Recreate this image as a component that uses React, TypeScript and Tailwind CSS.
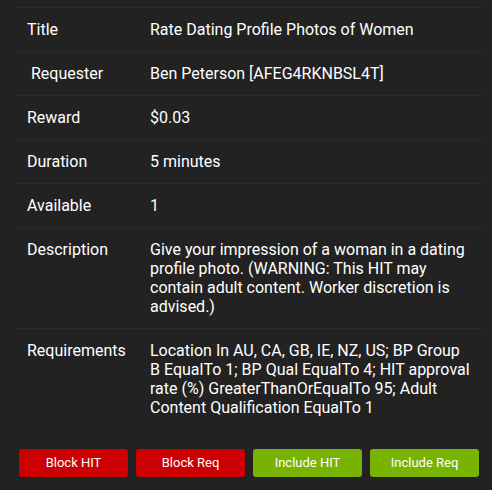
import React from "react";

const rows: [string, string][] = [
  ["Title", "Rate Dating Profile Photos of Women"],
  ["\u00a0Requester", "Ben Peterson [AFEG4RKNBSL4T]"],
  ["Reward", "$0.03"],
  ["Duration", "5 minutes"],
  ["Available", "1"],
  [
    "Description",
    "Give your impression of a woman in a dating profile photo. (WARNING: This HIT may contain adult content. Worker discretion is advised.)",
  ],
  [
    "Requirements",
    "Location In AU, CA, GB, IE, NZ, US; BP Group B EqualTo 1; BP Qual EqualTo 4; HIT approval rate (%) GreaterThanOrEqualTo 95; Adult Content Qualification EqualTo 1",
  ],
];

export default function App() {
  return (
    <div
      className="w-[492px] h-[490px] bg-[#222222] text-white overflow-hidden"
      style={{ fontFamily: "Roboto, 'Noto Sans', sans-serif" }}
    >
      <div className="pt-[7px] pl-[15px] w-[483px]">
        <div className="flex flex-col">
          {rows.map(([k, v]) => (
            <div
              key={k}
              className="flex text-[16px] leading-[19px] border-t border-[#2c2c2c]"
            >
              <div className="w-[123px] shrink-0 p-3 whitespace-pre">{k}</div>
              <div className="flex-1 p-3">{v}</div>
            </div>
          ))}
        </div>
      </div>
      <div className="flex gap-2 pl-[19px] mt-[20px]">
        <button className="w-[109px] h-[28px] rounded-[3px] bg-[#cc0000] text-white text-[13px]">
          Block HIT
        </button>
        <button className="w-[109px] h-[28px] rounded-[3px] bg-[#cc0000] text-white text-[13px]">
          Block Req
        </button>
        <button className="w-[109px] h-[28px] rounded-[3px] bg-[#77b300] text-white text-[13px]">
          Include HIT
        </button>
        <button className="w-[109px] h-[28px] rounded-[3px] bg-[#77b300] text-white text-[13px]">
          Include Req
        </button>
      </div>
    </div>
  );
}
